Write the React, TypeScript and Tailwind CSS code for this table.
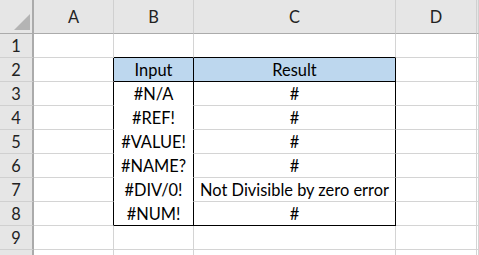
import clsx from 'clsx'

const cols = ['A', 'B', 'C', 'D', '']

const rows: { input: string; result: string }[] = [
  { input: '#N/A', result: '#' },
  { input: '#REF!', result: '#' },
  { input: '#VALUE!', result: '#' },
  { input: '#NAME?', result: '#' },
  { input: '#DIV/0!', result: 'Not Divisible by zero error' },
  { input: '#NUM!', result: '#' },
]

// cell text for a given sheet row (1-based) and column index (0 = A)
function cellText(r: number, c: number) {
  if (r === 2 && c === 1) return 'Input'
  if (r === 2 && c === 2) return 'Result'
  if (r >= 3 && r <= 8) {
    const row = rows[r - 3]
    if (c === 1) return row.input
    if (c === 2) return row.result
  }
  return ''
}

function Cell({ r, c }: { r: number; c: number }) {
  const inTable = r >= 2 && r <= 8 && (c === 1 || c === 2)
  const rightBlack = r >= 2 && r <= 8 && (c === 0 || c === 1 || c === 2)
  const bottomBlack = (r === 1 || r === 2 || r === 8) && (c === 1 || c === 2)
  const hideBottom = c === 1 && r >= 3 && r <= 7
  return (
    <div
      className={clsx(
        'flex items-end justify-center whitespace-nowrap border-r border-b pb-[3px] text-[16.4px] leading-none text-black',
        rightBlack ? 'border-r-black' : 'border-r-[#d4d4d4]',
        bottomBlack ? 'border-b-black' : hideBottom ? 'border-b-white' : 'border-b-[#d4d4d4]',
        inTable && r === 2 ? 'bg-[#bdd7ee]' : 'bg-white',
      )}
    >
      {cellText(r, c)}
    </div>
  )
}

export default function App() {
  const sheetRows = [1, 2, 3, 4, 5, 6, 7, 8, 9, 10]
  return (
    <div
      className="h-[255px] w-[479px] overflow-hidden bg-white"
      style={{ fontFamily: 'Lato, "Open Sans", sans-serif' }}
    >
      <div className="grid grid-cols-[34px_80px_80px_202px_81px_1fr] grid-rows-[34px_repeat(10,24px)]">
        {/* corner */}
        <div className="relative border-r-2 border-b border-r-[#ababab] border-b-[#ababab] bg-[#e6e6e6]">
          <svg className="absolute left-[14px] top-[14px]" width="16" height="16" viewBox="0 0 16 16">
            <polygon points="16,0 16,16 0,16" fill="#b4b4b4" />
          </svg>
        </div>
        {/* column headers */}
        {cols.map((l, i) => (
          <div
            key={i}
            className="flex items-end justify-center border-r border-b border-r-[#d0d0d0] border-b-[#ababab] bg-[#e6e6e6] pb-[8px] text-[16.4px] leading-none text-[#222]"
          >
            {l}
          </div>
        ))}
        {sheetRows.map((r) => (
          <div key={r} className="contents">
            <div className="flex items-end justify-center border-r-2 border-b border-r-[#ababab] border-b-[#d0d0d0] bg-[#e6e6e6] pb-[3px] text-[16.4px] leading-none text-[#222]">
              {r < 10 ? r : ''}
            </div>
            {[0, 1, 2, 3, 4].map((c) => (
              <Cell key={c} r={r} c={c} />
            ))}
          </div>
        ))}
      </div>
    </div>
  )
}
